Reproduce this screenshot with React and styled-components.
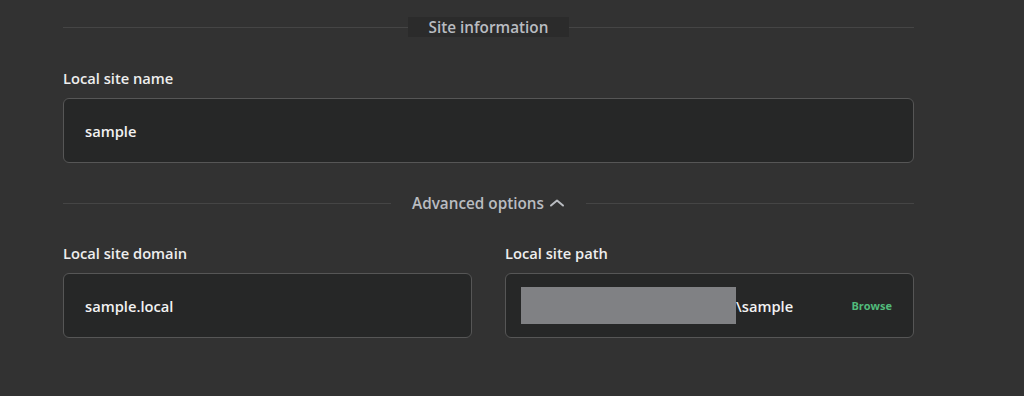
import React from 'react'
import styled, { createGlobalStyle } from 'styled-components';

const GlobalStyle = createGlobalStyle`
  html, body {
    margin: 0;
    padding: 0;
    background: #323232;
    font-family: "Open Sans", Lato, "Liberation Sans", sans-serif;
  }
`;

const Page = styled.div`
  width: 1024px;
  height: 396px;
  background: #323232;
  overflow: hidden;
`;

const Content = styled.div`
  width: 851px;
  margin-left: 63px;
  padding-top: 17px;
  display: flex;
  flex-direction: column;
`;

const Divider = styled.div`
  display: flex;
  align-items: center;
  height: 20px;
  margin: ${({ $mt }) => $mt || 0}px 0 ${({ $mb }) => $mb}px;

  &::before, &::after {
    content: '';
    flex: 1;
    height: 1px;
    background: #454545;
  }
`;

const DividerLabel = styled.div`
  display: flex;
  align-items: center;
  gap: 5px;
  height: 20px;
  padding: 0 ${({ $pad }) => $pad}px;
  background: ${({ $boxed }) => ($boxed ? '#2b2b2b' : 'transparent')};
  color: #b9bcc1;
  font-size: 15.3px;
  font-weight: 600;
`;

const Field = styled.div`
  display: flex;
  flex-direction: column;
  gap: 10px;
  flex: 1;
`;

const Label = styled.div`
  color: #eeeeee;
  font-size: 14.7px;
  font-weight: 600;
  height: 20px;
  line-height: 20px;
`;

const InputBox = styled.div`
  box-sizing: border-box;
  height: 65px;
  border: 1.5px solid #565656;
  border-radius: 6px;
  background: #262727;
  display: flex;
  align-items: center;
  padding: 0 21px 0 ${({ $pl }) => $pl || 21}px;
  color: #f2f2f2;
  font-size: 14.7px;
  font-weight: 600;
`;

const Row = styled.div`
  display: flex;
  gap: 33px;
`;

const Redacted = styled.span`
  display: inline-block;
  width: 215px;
  height: 37px;
  background: #808184;
`;

const PathText = styled.span`
  flex: 1;
  display: flex;
  align-items: center;
`;

const Browse = styled.span`
  color: #51bb7b;
  font-size: 11px;
  font-weight: 700;
`;

const Chevron = () => (
  <svg width="16" height="10" viewBox="0 0 16 10" fill="none">
    <path d="M2 7.5 L8 2.5 L14 7.5" stroke="#b9bcc1" strokeWidth="2" strokeLinecap="round" strokeLinejoin="round" />
  </svg>
);

const App = () => {
  return (
    <Page>
      <GlobalStyle />
      <Content>
        <Divider $mb={31}>
          <DividerLabel $boxed $pad={21}>Site information</DividerLabel>
        </Divider>
        <Field>
          <Label>Local site name</Label>
          <InputBox>sample</InputBox>
        </Field>
        <Divider $mt={30} $mb={30}>
          <DividerLabel $pad={21}>Advanced options <Chevron /></DividerLabel>
        </Divider>
        <Row>
          <Field>
            <Label>Local site domain</Label>
            <InputBox>sample.local</InputBox>
          </Field>
          <Field>
            <Label>Local site path</Label>
            <InputBox $pl={15}>
              <PathText><Redacted />\sample</PathText>
              <Browse>Browse</Browse>
            </InputBox>
          </Field>
        </Row>
      </Content>
    </Page>
  )
}

export default App
